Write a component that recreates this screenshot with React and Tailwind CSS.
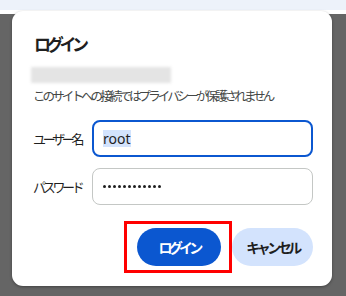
export default function App() {
  const jp = { fontFamily: '"Noto Sans CJK JP", sans-serif' };
  const latin = { fontFamily: '"Noto Sans", "Open Sans", sans-serif' };
  return (
    <div className="w-[346px] h-[296px] bg-[#656565] overflow-hidden flex flex-col" style={jp}>
      <div className="h-[10px] bg-[#edf2fa] shrink-0" />
      <div className="h-[4px] bg-white shrink-0" />
      <div className="ml-[12px] -mt-[3px] w-[320px] h-[275px] bg-white rounded-[11px] shadow-[0_1px_3px_rgba(0,0,0,0.35)] flex flex-col pl-[22px] pr-[19px] pt-[21px]">
        <div className="text-[17px] leading-[24px] font-bold text-[#1f1f1f] tracking-[-4.3px] whitespace-nowrap">ログイン</div>
        <div className="mt-[11px] -ml-[3px] w-[140px] h-[16px] bg-[#e4e4e4] blur-[1.5px]" />
        <div className="mt-[5px] -ml-[1px] text-[12.5px] leading-[16px] text-[#444746] tracking-[-2.9px] whitespace-nowrap">このサイトへの接続ではプライバシーが保護されません</div>
        <div className="mt-[16px] -ml-[1px] flex items-center">
          <div className="w-[59px] text-[13px] text-[#1f1f1f] tracking-[-3.3px] whitespace-nowrap">ユーザー名</div>
          <div className="w-[221px] h-[37px] border-2 border-[#0b57d0] rounded-[8px] flex items-center pl-[9px]">
            <span className="bg-[#d3e3fd] text-[14px] leading-[17px] text-[#1f1f1f]" style={latin}>root</span>
          </div>
        </div>
        <div className="mt-[11px] -ml-[1px] flex items-center">
          <div className="w-[59px] text-[13px] text-[#1f1f1f] tracking-[-3.3px] whitespace-nowrap">パスワード</div>
          <div className="w-[221px] h-[37px] border border-[#c4c7c5] rounded-[8px] flex items-center pl-[10px] gap-[2px]">
            {Array.from({ length: 12 }).map((_, i) => (
              <span key={i} className="w-[3px] h-[3px] rounded-full bg-[#1f1f1f]" />
            ))}
          </div>
        </div>
        <div className="mt-[23px] flex justify-end gap-[11px]">
          <div className="relative">
            <button className="w-[84px] h-[38px] rounded-full bg-[#0b57d0] text-white text-[14px] font-bold tracking-[-3.8px] whitespace-nowrap">ログイン</button>
            <div className="absolute -left-[13px] -right-[11px] -top-[7px] -bottom-[7px] border-[3px] border-[#ff0000] z-10" />
          </div>
          <button className="w-[81px] h-[38px] rounded-full bg-[#d3e3fd] text-[#1f1f1f] text-[14px] font-bold tracking-[-3.5px] whitespace-nowrap">キャンセル</button>
        </div>
      </div>
    </div>
  );
}
